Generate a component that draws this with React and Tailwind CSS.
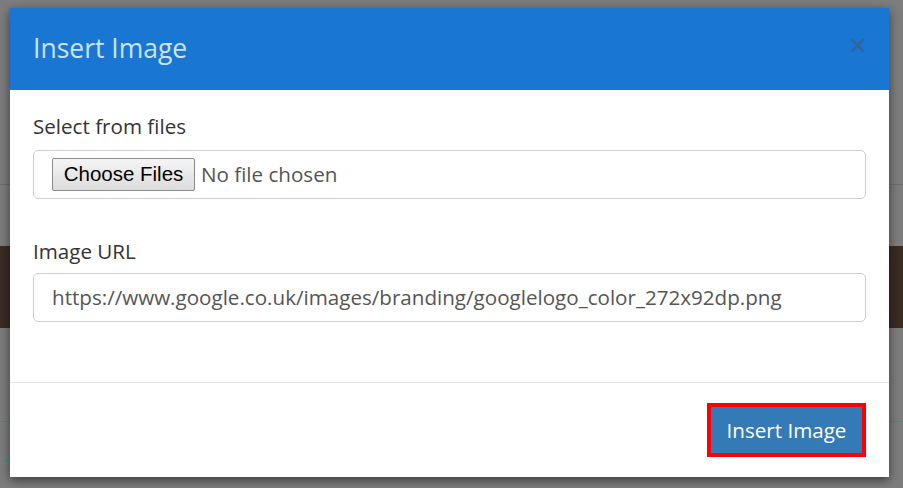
const font = { fontFamily: '"Open Sans", "Noto Sans", sans-serif' };

function Backdrop() {
  return (
    <div className="flex h-[488px] w-[903px] flex-col bg-[#7d7d7d]">
      <div className="h-[185px] border-b border-[#6e6e6e]" />
      <div className="h-[61px]" />
      <div className="h-[82px] bg-[#3b2c24]" />
      <div className="h-[94px] border-b border-[#5f7f78]" />
      <div className="flex h-[40px] items-end pl-1">
        <div className="h-[20px] w-[6px] border-b-2 border-[#4b8f86]" />
      </div>
    </div>
  );
}

export default function App() {
  return (
    <div className="relative h-[488px] w-[903px] overflow-hidden" style={font}>
      <Backdrop />

      {/* modal */}
      <div className="absolute left-[10px] top-[8px] flex h-[469px] w-[879px] flex-col bg-white shadow-[0_3px_10px_rgba(0,0,0,0.55)]">
        <div className="flex h-[82px] items-center justify-between bg-[#1976d2] pl-[23px] pr-[24px]">
          <h4 className="text-[26.5px] text-[#cbe2f7]">Insert Image</h4>
          <svg width="15" height="15" viewBox="0 0 15 15" className="mt-[-8px]">
            <path d="M2 2 L13 13 M13 2 L2 13" stroke="#32659c" strokeWidth="2.6" strokeLinecap="round" />
          </svg>
        </div>

        <div className="flex h-[292px] flex-col px-[23px] pt-[22px]">
          <label className="h-[28px] text-[20.6px] font-medium leading-[28px] text-[#333]">
            Select from files
          </label>
          <div className="mt-[10px] flex h-[49px] items-center rounded-[5px] border border-[#ccc] pl-[18px]">
            <button
              className="h-[33px] w-[143px] rounded-[2px] border border-[#8a8a8a] bg-gradient-to-b from-[#f5f5f5] to-[#dcdcdc] text-[20.5px] text-black"
              style={{ fontFamily: '"Liberation Sans", Arial, sans-serif' }}
            >
              Choose Files
            </button>
            <span className="ml-[6px] text-[20.6px] text-[#555]">No file chosen</span>
          </div>

          <label className="mt-[38px] h-[28px] text-[20.6px] font-medium leading-[28px] text-[#333]">
            Image URL
          </label>
          <div className="mt-[8px] flex h-[49px] items-center rounded-[5px] border border-[#ccc] pl-[18px] text-[20.6px] text-[#555]">
            https://www.google.co.uk/images/branding/googlelogo_color_272x92dp.png
          </div>
        </div>

        <div className="flex flex-1 items-center justify-end border-t border-[#e5e5e5] pr-[23px]">
          <div className="border-[4px] border-[#ff0000]">
            <button className="flex h-[46px] w-[151px] items-center justify-center bg-[#337ab7] text-[20.6px] text-white">
              Insert Image
            </button>
          </div>
        </div>
      </div>
    </div>
  );
}
